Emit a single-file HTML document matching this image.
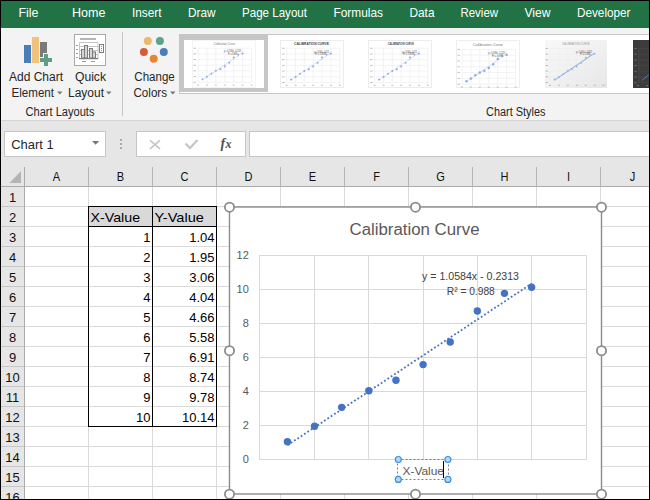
<!DOCTYPE html>
<html><head><meta charset="utf-8"><style>
html,body{margin:0;padding:0;width:650px;height:500px;overflow:hidden;background:#fff;font-family:"Liberation Sans", sans-serif;}
svg{display:block;}
</style></head><body>
<svg width="650" height="500" viewBox="0 0 650 500" font-family='"Liberation Sans", sans-serif'><rect x="0" y="0" width="650" height="500" fill="#ffffff"/>
<rect x="0" y="0" width="650" height="28" fill="#217346"/>
<text x="18.5" y="17.3" font-size="13" fill="#ffffff" textLength="20" lengthAdjust="spacingAndGlyphs">File</text>
<text x="72.0" y="17.3" font-size="13" fill="#ffffff" textLength="33.5" lengthAdjust="spacingAndGlyphs">Home</text>
<text x="132.0" y="17.3" font-size="13" fill="#ffffff" textLength="29.5" lengthAdjust="spacingAndGlyphs">Insert</text>
<text x="188.0" y="17.3" font-size="13" fill="#ffffff" textLength="27.5" lengthAdjust="spacingAndGlyphs">Draw</text>
<text x="242.0" y="17.3" font-size="13" fill="#ffffff" textLength="65.0" lengthAdjust="spacingAndGlyphs">Page Layout</text>
<text x="333.5" y="17.3" font-size="13" fill="#ffffff" textLength="49.5" lengthAdjust="spacingAndGlyphs">Formulas</text>
<text x="409.5" y="17.3" font-size="13" fill="#ffffff" textLength="25" lengthAdjust="spacingAndGlyphs">Data</text>
<text x="460.5" y="17.3" font-size="13" fill="#ffffff" textLength="37.5" lengthAdjust="spacingAndGlyphs">Review</text>
<text x="524.5" y="17.3" font-size="13" fill="#ffffff" textLength="26" lengthAdjust="spacingAndGlyphs">View</text>
<text x="577.0" y="17.3" font-size="13" fill="#ffffff" textLength="53.5" lengthAdjust="spacingAndGlyphs">Developer</text>
<rect x="0" y="28" width="650" height="92" fill="#f3f3f3"/>
<rect x="0" y="120" width="650" height="1" fill="#d5d5d5"/>
<rect x="24" y="45" width="7" height="18" fill="#4a7ebb"/>
<rect x="32" y="37" width="7" height="26" fill="#f0c27b"/>
<rect x="40" y="42" width="7" height="15" fill="#7a7a7a"/>
<path d="M44 54h4v4h4v4h-4v4h-4v-4h-4v-4h4z" fill="#5e9f84" stroke="#f3f3f3" stroke-width="2" paint-order="stroke"/>
<text x="9" y="80.7" font-size="12" fill="#262626" textLength="54" lengthAdjust="spacingAndGlyphs">Add Chart</text>
<text x="11.5" y="97" font-size="12" fill="#262626" textLength="42.5" lengthAdjust="spacingAndGlyphs">Element</text>
<path d="M57 91.5h5.5l-2.75 3z" fill="#777"/>
<rect x="74.5" y="34.5" width="31" height="31" fill="#fff" stroke="#a8a8a8" stroke-width="1"/>
<rect x="80" y="38" width="16" height="2" fill="#b5b5b5"/>
<g stroke="#c4c4c4" stroke-width="1" fill="none"><path d="M79.5 42.5h18.5M79.5 46.5h18.5M79.5 50.5h18.5M79.5 54.5h18.5M79.5 42.5v16M98 42.5v16"/></g>
<g stroke="#7b7b7b" stroke-width="1" fill="#d6d6d6"><rect x="81.5" y="49.5" width="3" height="8.5"/><rect x="84.5" y="45.5" width="3" height="12.5"/><rect x="89.5" y="48.5" width="3" height="9.5"/><rect x="92.5" y="52" width="3" height="6"/></g>
<rect x="79" y="58" width="19" height="1.2" fill="#7b7b7b"/>
<g fill="#9a9a9a"><rect x="76" y="45" width="2" height="1"/><rect x="76" y="49" width="2" height="1"/><rect x="76" y="53" width="2" height="1"/><rect x="76" y="57" width="2" height="1"/><rect x="82" y="61" width="4" height="1"/><rect x="91" y="61" width="4" height="1"/></g>
<rect x="99.5" y="44.5" width="4" height="8" fill="#fff" stroke="#7b7b7b" stroke-width="1"/>
<g fill="#7b7b7b"><circle cx="101.5" cy="46.5" r="0.6"/><circle cx="101.5" cy="48.5" r="0.6"/><circle cx="101.5" cy="50.5" r="0.6"/></g>
<text x="75" y="80.7" font-size="12" fill="#262626" textLength="31" lengthAdjust="spacingAndGlyphs">Quick</text>
<text x="68" y="97" font-size="12" fill="#262626" textLength="36" lengthAdjust="spacingAndGlyphs">Layout</text>
<path d="M106 91.5h5.5l-2.75 3z" fill="#777"/>
<text x="25.5" y="115.7" font-size="12" fill="#262626" textLength="69" lengthAdjust="spacingAndGlyphs">Chart Layouts</text>
<rect x="122" y="32" width="1" height="84" fill="#c4c4c4"/>
<circle cx="147.8" cy="41" r="4" fill="#eab86a"/>
<circle cx="159.9" cy="41" r="4" fill="#5fa28a"/>
<circle cx="143.9" cy="52" r="4" fill="#d75a39"/>
<circle cx="163.8" cy="52" r="4" fill="#4a7ebb"/>
<circle cx="153.7" cy="58.7" r="4" fill="#e8862f"/>
<text x="134.3" y="81" font-size="12" fill="#262626" textLength="40.5" lengthAdjust="spacingAndGlyphs">Change</text>
<text x="133.5" y="97" font-size="12" fill="#262626" textLength="33.5" lengthAdjust="spacingAndGlyphs">Colors</text>
<path d="M170 91.5h5.5l-2.75 3z" fill="#777"/>
<rect x="179.5" y="34.5" width="480" height="59" fill="#ffffff" stroke="#c6c6c6" stroke-width="1"/>
<rect x="180" y="35" width="88" height="57" fill="#c6c6c6"/>
<rect x="184" y="40" width="80" height="48" fill="#ffffff"/>
<defs><linearGradient id="gr5" x1="0" y1="0" x2="1" y2="1"><stop offset="0" stop-color="#f8f8f8"/><stop offset="0.5" stop-color="#f1f1f1"/><stop offset="1" stop-color="#e6e6e6"/></linearGradient></defs>
<rect x="192.5" y="40.5" width="63" height="47" fill="#ffffff" stroke="#f4f4f4" stroke-width="1"/><line x1="198" y1="82.3" x2="251.5" y2="82.3" stroke="#eeeeee" stroke-width="0.7"/><line x1="198.0" y1="48.2" x2="198.0" y2="82.3" stroke="#eeeeee" stroke-width="0.7"/><line x1="198" y1="76.6" x2="251.5" y2="76.6" stroke="#eeeeee" stroke-width="0.7"/><line x1="206.9" y1="48.2" x2="206.9" y2="82.3" stroke="#eeeeee" stroke-width="0.7"/><line x1="198" y1="70.9" x2="251.5" y2="70.9" stroke="#eeeeee" stroke-width="0.7"/><line x1="215.8" y1="48.2" x2="215.8" y2="82.3" stroke="#eeeeee" stroke-width="0.7"/><line x1="198" y1="65.2" x2="251.5" y2="65.2" stroke="#eeeeee" stroke-width="0.7"/><line x1="224.8" y1="48.2" x2="224.8" y2="82.3" stroke="#eeeeee" stroke-width="0.7"/><line x1="198" y1="59.6" x2="251.5" y2="59.6" stroke="#eeeeee" stroke-width="0.7"/><line x1="233.7" y1="48.2" x2="233.7" y2="82.3" stroke="#eeeeee" stroke-width="0.7"/><line x1="198" y1="53.9" x2="251.5" y2="53.9" stroke="#eeeeee" stroke-width="0.7"/><line x1="242.6" y1="48.2" x2="242.6" y2="82.3" stroke="#eeeeee" stroke-width="0.7"/><line x1="198" y1="48.2" x2="251.5" y2="48.2" stroke="#eeeeee" stroke-width="0.7"/><line x1="251.5" y1="48.2" x2="251.5" y2="82.3" stroke="#eeeeee" stroke-width="0.7"/><rect x="193.5" y="81.8" width="2.5" height="1" fill="#8a8a8a" opacity="0.55"/><rect x="197.0" y="84.6" width="2" height="1" fill="#8a8a8a" opacity="0.55"/><rect x="193.5" y="76.1" width="2.5" height="1" fill="#8a8a8a" opacity="0.55"/><rect x="205.9" y="84.6" width="2" height="1" fill="#8a8a8a" opacity="0.55"/><rect x="193.5" y="70.4" width="2.5" height="1" fill="#8a8a8a" opacity="0.55"/><rect x="214.8" y="84.6" width="2" height="1" fill="#8a8a8a" opacity="0.55"/><rect x="193.5" y="64.8" width="2.5" height="1" fill="#8a8a8a" opacity="0.55"/><rect x="223.8" y="84.6" width="2" height="1" fill="#8a8a8a" opacity="0.55"/><rect x="193.5" y="59.1" width="2.5" height="1" fill="#8a8a8a" opacity="0.55"/><rect x="232.7" y="84.6" width="2" height="1" fill="#8a8a8a" opacity="0.55"/><rect x="193.5" y="53.4" width="2.5" height="1" fill="#8a8a8a" opacity="0.55"/><rect x="241.6" y="84.6" width="2" height="1" fill="#8a8a8a" opacity="0.55"/><rect x="193.5" y="47.7" width="2.5" height="1" fill="#8a8a8a" opacity="0.55"/><rect x="250.5" y="84.6" width="2" height="1" fill="#8a8a8a" opacity="0.55"/><text x="213.5" y="45.28" font-size="3" fill="#777777" textLength="21.5" lengthAdjust="spacingAndGlyphs">Calibration Curve</text><text x="224" y="52.2" font-size="2.6" fill="#444" textLength="17" lengthAdjust="spacingAndGlyphs">y = 1.0584x - 0.2313</text><text x="228" y="55.3" font-size="2.6" fill="#444" textLength="9" lengthAdjust="spacingAndGlyphs">R² = 0.988</text><line x1="202.5" y1="79.9" x2="242.6" y2="52.9" stroke="#8aa6dd" stroke-width="0.7" stroke-dasharray="0.8 0.8"/><circle cx="202.5" cy="79.3" r="1.05" fill="#98b0e0"/><circle cx="206.9" cy="76.8" r="1.05" fill="#98b0e0"/><circle cx="211.4" cy="73.6" r="1.05" fill="#98b0e0"/><circle cx="215.8" cy="70.8" r="1.05" fill="#98b0e0"/><circle cx="220.3" cy="69.1" r="1.05" fill="#98b0e0"/><circle cx="224.8" cy="66.4" r="1.05" fill="#98b0e0"/><circle cx="229.2" cy="62.7" r="1.05" fill="#98b0e0"/><circle cx="233.7" cy="57.5" r="1.05" fill="#98b0e0"/><circle cx="238.1" cy="54.5" r="1.05" fill="#98b0e0"/><circle cx="242.6" cy="53.5" r="1.05" fill="#98b0e0"/>
<rect x="280.5" y="40.5" width="63" height="47" fill="#ffffff" stroke="#ececec" stroke-width="1"/><line x1="286.6" y1="82.5" x2="339.8" y2="82.5" stroke="#eeeeee" stroke-width="0.7"/><line x1="286.6" y1="48.3" x2="286.6" y2="82.5" stroke="#eeeeee" stroke-width="0.7"/><line x1="286.6" y1="76.8" x2="339.8" y2="76.8" stroke="#eeeeee" stroke-width="0.7"/><line x1="295.5" y1="48.3" x2="295.5" y2="82.5" stroke="#eeeeee" stroke-width="0.7"/><line x1="286.6" y1="71.1" x2="339.8" y2="71.1" stroke="#eeeeee" stroke-width="0.7"/><line x1="304.3" y1="48.3" x2="304.3" y2="82.5" stroke="#eeeeee" stroke-width="0.7"/><line x1="286.6" y1="65.4" x2="339.8" y2="65.4" stroke="#eeeeee" stroke-width="0.7"/><line x1="313.2" y1="48.3" x2="313.2" y2="82.5" stroke="#eeeeee" stroke-width="0.7"/><line x1="286.6" y1="59.7" x2="339.8" y2="59.7" stroke="#eeeeee" stroke-width="0.7"/><line x1="322.1" y1="48.3" x2="322.1" y2="82.5" stroke="#eeeeee" stroke-width="0.7"/><line x1="286.6" y1="54.0" x2="339.8" y2="54.0" stroke="#eeeeee" stroke-width="0.7"/><line x1="330.9" y1="48.3" x2="330.9" y2="82.5" stroke="#eeeeee" stroke-width="0.7"/><line x1="286.6" y1="48.3" x2="339.8" y2="48.3" stroke="#eeeeee" stroke-width="0.7"/><line x1="339.8" y1="48.3" x2="339.8" y2="82.5" stroke="#eeeeee" stroke-width="0.7"/><rect x="282.1" y="82.0" width="2.5" height="1" fill="#8a8a8a" opacity="0.55"/><rect x="285.6" y="84.8" width="2" height="1" fill="#8a8a8a" opacity="0.55"/><rect x="282.1" y="76.3" width="2.5" height="1" fill="#8a8a8a" opacity="0.55"/><rect x="294.5" y="84.8" width="2" height="1" fill="#8a8a8a" opacity="0.55"/><rect x="282.1" y="70.6" width="2.5" height="1" fill="#8a8a8a" opacity="0.55"/><rect x="303.3" y="84.8" width="2" height="1" fill="#8a8a8a" opacity="0.55"/><rect x="282.1" y="64.9" width="2.5" height="1" fill="#8a8a8a" opacity="0.55"/><rect x="312.2" y="84.8" width="2" height="1" fill="#8a8a8a" opacity="0.55"/><rect x="282.1" y="59.2" width="2.5" height="1" fill="#8a8a8a" opacity="0.55"/><rect x="321.1" y="84.8" width="2" height="1" fill="#8a8a8a" opacity="0.55"/><rect x="282.1" y="53.5" width="2.5" height="1" fill="#8a8a8a" opacity="0.55"/><rect x="329.9" y="84.8" width="2" height="1" fill="#8a8a8a" opacity="0.55"/><rect x="282.1" y="47.8" width="2.5" height="1" fill="#8a8a8a" opacity="0.55"/><rect x="338.8" y="84.8" width="2" height="1" fill="#8a8a8a" opacity="0.55"/><text x="294" y="45.28" font-size="3" fill="#444444" font-weight="bold" textLength="35" lengthAdjust="spacingAndGlyphs">CALIBRATION CURVE</text><text x="314" y="53" font-size="2.6" fill="#444" textLength="15" lengthAdjust="spacingAndGlyphs">y = 1.0584x - 0.2313</text><text x="315" y="55.2" font-size="2.6" fill="#444" textLength="11" lengthAdjust="spacingAndGlyphs">R² = 0.988</text><line x1="291.0" y1="80.1" x2="330.9" y2="53.0" stroke="#8aa6dd" stroke-width="0.7" stroke-dasharray="0.8 0.8"/><circle cx="291.0" cy="79.5" r="1.05" fill="#98b0e0"/><circle cx="295.5" cy="76.9" r="1.05" fill="#98b0e0"/><circle cx="299.9" cy="73.8" r="1.05" fill="#98b0e0"/><circle cx="304.3" cy="71.0" r="1.05" fill="#98b0e0"/><circle cx="308.8" cy="69.2" r="1.05" fill="#98b0e0"/><circle cx="313.2" cy="66.6" r="1.05" fill="#98b0e0"/><circle cx="317.6" cy="62.8" r="1.05" fill="#98b0e0"/><circle cx="322.1" cy="57.6" r="1.05" fill="#98b0e0"/><circle cx="326.5" cy="54.6" r="1.05" fill="#98b0e0"/><circle cx="330.9" cy="53.6" r="1.05" fill="#98b0e0"/>
<rect x="368.5" y="40.5" width="63" height="47" fill="#ffffff" stroke="#ececec" stroke-width="1"/><line x1="374.6" y1="82.5" x2="427.8" y2="82.5" stroke="#eeeeee" stroke-width="0.7"/><line x1="374.6" y1="48.3" x2="374.6" y2="82.5" stroke="#eeeeee" stroke-width="0.7"/><line x1="374.6" y1="76.8" x2="427.8" y2="76.8" stroke="#eeeeee" stroke-width="0.7"/><line x1="383.5" y1="48.3" x2="383.5" y2="82.5" stroke="#eeeeee" stroke-width="0.7"/><line x1="374.6" y1="71.1" x2="427.8" y2="71.1" stroke="#eeeeee" stroke-width="0.7"/><line x1="392.3" y1="48.3" x2="392.3" y2="82.5" stroke="#eeeeee" stroke-width="0.7"/><line x1="374.6" y1="65.4" x2="427.8" y2="65.4" stroke="#eeeeee" stroke-width="0.7"/><line x1="401.2" y1="48.3" x2="401.2" y2="82.5" stroke="#eeeeee" stroke-width="0.7"/><line x1="374.6" y1="59.7" x2="427.8" y2="59.7" stroke="#eeeeee" stroke-width="0.7"/><line x1="410.1" y1="48.3" x2="410.1" y2="82.5" stroke="#eeeeee" stroke-width="0.7"/><line x1="374.6" y1="54.0" x2="427.8" y2="54.0" stroke="#eeeeee" stroke-width="0.7"/><line x1="418.9" y1="48.3" x2="418.9" y2="82.5" stroke="#eeeeee" stroke-width="0.7"/><line x1="374.6" y1="48.3" x2="427.8" y2="48.3" stroke="#eeeeee" stroke-width="0.7"/><line x1="427.8" y1="48.3" x2="427.8" y2="82.5" stroke="#eeeeee" stroke-width="0.7"/><rect x="370.1" y="82.0" width="2.5" height="1" fill="#8a8a8a" opacity="0.55"/><rect x="373.6" y="84.8" width="2" height="1" fill="#8a8a8a" opacity="0.55"/><rect x="370.1" y="76.3" width="2.5" height="1" fill="#8a8a8a" opacity="0.55"/><rect x="382.5" y="84.8" width="2" height="1" fill="#8a8a8a" opacity="0.55"/><rect x="370.1" y="70.6" width="2.5" height="1" fill="#8a8a8a" opacity="0.55"/><rect x="391.3" y="84.8" width="2" height="1" fill="#8a8a8a" opacity="0.55"/><rect x="370.1" y="64.9" width="2.5" height="1" fill="#8a8a8a" opacity="0.55"/><rect x="400.2" y="84.8" width="2" height="1" fill="#8a8a8a" opacity="0.55"/><rect x="370.1" y="59.2" width="2.5" height="1" fill="#8a8a8a" opacity="0.55"/><rect x="409.1" y="84.8" width="2" height="1" fill="#8a8a8a" opacity="0.55"/><rect x="370.1" y="53.5" width="2.5" height="1" fill="#8a8a8a" opacity="0.55"/><rect x="417.9" y="84.8" width="2" height="1" fill="#8a8a8a" opacity="0.55"/><rect x="370.1" y="47.8" width="2.5" height="1" fill="#8a8a8a" opacity="0.55"/><rect x="426.8" y="84.8" width="2" height="1" fill="#8a8a8a" opacity="0.55"/><text x="387.7" y="45.28" font-size="3" fill="#444444" font-weight="bold" textLength="26.099999999999998" lengthAdjust="spacingAndGlyphs">CALIBRATION CURVE</text><text x="402" y="53" font-size="2.6" fill="#444" textLength="15" lengthAdjust="spacingAndGlyphs">y = 1.0584x - 0.2313</text><text x="403" y="55.2" font-size="2.6" fill="#444" textLength="11" lengthAdjust="spacingAndGlyphs">R² = 0.988</text><line x1="379.0" y1="80.1" x2="418.9" y2="53.0" stroke="#8aa6dd" stroke-width="0.7" stroke-dasharray="0.8 0.8"/><circle cx="379.0" cy="79.5" r="1.05" fill="#98b0e0"/><circle cx="383.5" cy="76.9" r="1.05" fill="#98b0e0"/><circle cx="387.9" cy="73.8" r="1.05" fill="#98b0e0"/><circle cx="392.3" cy="71.0" r="1.05" fill="#98b0e0"/><circle cx="396.8" cy="69.2" r="1.05" fill="#98b0e0"/><circle cx="401.2" cy="66.6" r="1.05" fill="#98b0e0"/><circle cx="405.6" cy="62.8" r="1.05" fill="#98b0e0"/><circle cx="410.1" cy="57.6" r="1.05" fill="#98b0e0"/><circle cx="414.5" cy="54.6" r="1.05" fill="#98b0e0"/><circle cx="418.9" cy="53.6" r="1.05" fill="#98b0e0"/>
<rect x="456.5" y="40.5" width="63" height="47" fill="#ffffff" stroke="#eeeeee" stroke-width="1"/><line x1="462" y1="84.2" x2="515.5" y2="84.2" stroke="#eeeeee" stroke-width="0.7"/><line x1="462.0" y1="49.4" x2="462.0" y2="84.2" stroke="#eeeeee" stroke-width="0.7"/><line x1="462" y1="78.4" x2="515.5" y2="78.4" stroke="#eeeeee" stroke-width="0.7"/><line x1="470.9" y1="49.4" x2="470.9" y2="84.2" stroke="#eeeeee" stroke-width="0.7"/><line x1="462" y1="72.6" x2="515.5" y2="72.6" stroke="#eeeeee" stroke-width="0.7"/><line x1="479.8" y1="49.4" x2="479.8" y2="84.2" stroke="#eeeeee" stroke-width="0.7"/><line x1="462" y1="66.8" x2="515.5" y2="66.8" stroke="#eeeeee" stroke-width="0.7"/><line x1="488.8" y1="49.4" x2="488.8" y2="84.2" stroke="#eeeeee" stroke-width="0.7"/><line x1="462" y1="61.0" x2="515.5" y2="61.0" stroke="#eeeeee" stroke-width="0.7"/><line x1="497.7" y1="49.4" x2="497.7" y2="84.2" stroke="#eeeeee" stroke-width="0.7"/><line x1="462" y1="55.2" x2="515.5" y2="55.2" stroke="#eeeeee" stroke-width="0.7"/><line x1="506.6" y1="49.4" x2="506.6" y2="84.2" stroke="#eeeeee" stroke-width="0.7"/><line x1="462" y1="49.4" x2="515.5" y2="49.4" stroke="#eeeeee" stroke-width="0.7"/><line x1="515.5" y1="49.4" x2="515.5" y2="84.2" stroke="#eeeeee" stroke-width="0.7"/><rect x="457.5" y="83.7" width="2.5" height="1" fill="#8a8a8a" opacity="0.55"/><rect x="461.0" y="86.5" width="2" height="1" fill="#8a8a8a" opacity="0.55"/><rect x="457.5" y="77.9" width="2.5" height="1" fill="#8a8a8a" opacity="0.55"/><rect x="469.9" y="86.5" width="2" height="1" fill="#8a8a8a" opacity="0.55"/><rect x="457.5" y="72.1" width="2.5" height="1" fill="#8a8a8a" opacity="0.55"/><rect x="478.8" y="86.5" width="2" height="1" fill="#8a8a8a" opacity="0.55"/><rect x="457.5" y="66.3" width="2.5" height="1" fill="#8a8a8a" opacity="0.55"/><rect x="487.8" y="86.5" width="2" height="1" fill="#8a8a8a" opacity="0.55"/><rect x="457.5" y="60.5" width="2.5" height="1" fill="#8a8a8a" opacity="0.55"/><rect x="496.7" y="86.5" width="2" height="1" fill="#8a8a8a" opacity="0.55"/><rect x="457.5" y="54.7" width="2.5" height="1" fill="#8a8a8a" opacity="0.55"/><rect x="505.6" y="86.5" width="2" height="1" fill="#8a8a8a" opacity="0.55"/><rect x="457.5" y="48.9" width="2.5" height="1" fill="#8a8a8a" opacity="0.55"/><rect x="514.5" y="86.5" width="2" height="1" fill="#8a8a8a" opacity="0.55"/><text x="473" y="45.64" font-size="4" fill="#777777" textLength="30" lengthAdjust="spacingAndGlyphs">Calibration Curve</text><text x="488" y="54.4" font-size="2.6" fill="#444" textLength="17" lengthAdjust="spacingAndGlyphs">y = 1.0584x - 0.2313</text><text x="492" y="56.6" font-size="2.6" fill="#444" textLength="11" lengthAdjust="spacingAndGlyphs">R² = 0.988</text><line x1="466.5" y1="81.8" x2="506.6" y2="54.2" stroke="#8aa6dd" stroke-width="0.7" stroke-dasharray="0.8 0.8"/><circle cx="466.5" cy="81.2" r="1.2" fill="#90aadd"/><circle cx="470.9" cy="78.5" r="1.2" fill="#90aadd"/><circle cx="475.4" cy="75.3" r="1.2" fill="#90aadd"/><circle cx="479.8" cy="72.5" r="1.2" fill="#90aadd"/><circle cx="484.3" cy="70.7" r="1.2" fill="#90aadd"/><circle cx="488.8" cy="68.0" r="1.2" fill="#90aadd"/><circle cx="493.2" cy="64.2" r="1.2" fill="#90aadd"/><circle cx="497.7" cy="58.9" r="1.2" fill="#90aadd"/><circle cx="502.1" cy="55.8" r="1.2" fill="#90aadd"/><circle cx="506.6" cy="54.8" r="1.2" fill="#90aadd"/>
<rect x="545" y="40" width="62" height="48" fill="url(#gr5)"/><line x1="550" y1="82.5" x2="603.5" y2="82.5" stroke="#eeeeee" stroke-width="0.7"/><line x1="550.0" y1="48.4" x2="550.0" y2="82.5" stroke="#eeeeee" stroke-width="0.7"/><line x1="550" y1="76.8" x2="603.5" y2="76.8" stroke="#eeeeee" stroke-width="0.7"/><line x1="558.9" y1="48.4" x2="558.9" y2="82.5" stroke="#eeeeee" stroke-width="0.7"/><line x1="550" y1="71.1" x2="603.5" y2="71.1" stroke="#eeeeee" stroke-width="0.7"/><line x1="567.8" y1="48.4" x2="567.8" y2="82.5" stroke="#eeeeee" stroke-width="0.7"/><line x1="550" y1="65.5" x2="603.5" y2="65.5" stroke="#eeeeee" stroke-width="0.7"/><line x1="576.8" y1="48.4" x2="576.8" y2="82.5" stroke="#eeeeee" stroke-width="0.7"/><line x1="550" y1="59.8" x2="603.5" y2="59.8" stroke="#eeeeee" stroke-width="0.7"/><line x1="585.7" y1="48.4" x2="585.7" y2="82.5" stroke="#eeeeee" stroke-width="0.7"/><line x1="550" y1="54.1" x2="603.5" y2="54.1" stroke="#eeeeee" stroke-width="0.7"/><line x1="594.6" y1="48.4" x2="594.6" y2="82.5" stroke="#eeeeee" stroke-width="0.7"/><line x1="550" y1="48.4" x2="603.5" y2="48.4" stroke="#eeeeee" stroke-width="0.7"/><line x1="603.5" y1="48.4" x2="603.5" y2="82.5" stroke="#eeeeee" stroke-width="0.7"/><rect x="545.5" y="82.0" width="2.5" height="1" fill="#8a8a8a" opacity="0.55"/><rect x="549.0" y="84.8" width="2" height="1" fill="#8a8a8a" opacity="0.55"/><rect x="545.5" y="76.3" width="2.5" height="1" fill="#8a8a8a" opacity="0.55"/><rect x="557.9" y="84.8" width="2" height="1" fill="#8a8a8a" opacity="0.55"/><rect x="545.5" y="70.6" width="2.5" height="1" fill="#8a8a8a" opacity="0.55"/><rect x="566.8" y="84.8" width="2" height="1" fill="#8a8a8a" opacity="0.55"/><rect x="545.5" y="65.0" width="2.5" height="1" fill="#8a8a8a" opacity="0.55"/><rect x="575.8" y="84.8" width="2" height="1" fill="#8a8a8a" opacity="0.55"/><rect x="545.5" y="59.3" width="2.5" height="1" fill="#8a8a8a" opacity="0.55"/><rect x="584.7" y="84.8" width="2" height="1" fill="#8a8a8a" opacity="0.55"/><rect x="545.5" y="53.6" width="2.5" height="1" fill="#8a8a8a" opacity="0.55"/><rect x="593.6" y="84.8" width="2" height="1" fill="#8a8a8a" opacity="0.55"/><rect x="545.5" y="47.9" width="2.5" height="1" fill="#8a8a8a" opacity="0.55"/><rect x="602.5" y="84.8" width="2" height="1" fill="#8a8a8a" opacity="0.55"/><text x="562" y="45.28" font-size="3" fill="#999999" textLength="27.700000000000003" lengthAdjust="spacingAndGlyphs">CALIBRATION CURVE</text><text x="576" y="52.5" font-size="2.6" fill="#444" textLength="16" lengthAdjust="spacingAndGlyphs">y = 1.0584x - 0.2313</text><text x="580" y="54.5" font-size="2.6" fill="#444" textLength="10" lengthAdjust="spacingAndGlyphs">R² = 0.988</text><line x1="554.5" y1="80.1" x2="594.6" y2="53.1" stroke="#8fb0e6" stroke-width="1.1"/><circle cx="554.5" cy="79.5" r="0.9" fill="#9bb5e3"/><circle cx="558.9" cy="77.0" r="0.9" fill="#9bb5e3"/><circle cx="563.4" cy="73.8" r="0.9" fill="#9bb5e3"/><circle cx="567.8" cy="71.0" r="0.9" fill="#9bb5e3"/><circle cx="572.3" cy="69.3" r="0.9" fill="#9bb5e3"/><circle cx="576.8" cy="66.6" r="0.9" fill="#9bb5e3"/><circle cx="581.2" cy="62.9" r="0.9" fill="#9bb5e3"/><circle cx="585.7" cy="57.7" r="0.9" fill="#9bb5e3"/><circle cx="590.1" cy="54.7" r="0.9" fill="#9bb5e3"/><circle cx="594.6" cy="53.7" r="0.9" fill="#9bb5e3"/>
<rect x="633" y="40" width="16" height="48" fill="#3c3c3c"/>
<g fill="#aaaaaa" opacity="0.5"><rect x="634.5" y="48" width="2" height="1"/><rect x="634.5" y="53.7" width="2" height="1"/><rect x="634.5" y="59.4" width="2" height="1"/><rect x="634.5" y="65" width="2" height="1"/><rect x="634.5" y="70.8" width="2" height="1"/><rect x="634.5" y="76.5" width="2" height="1"/><rect x="634.5" y="82.2" width="2" height="1"/></g>
<line x1="638.9" y1="48.5" x2="638.9" y2="82.5" stroke="#555" stroke-width="0.6"/><g stroke="#4a4a4a" stroke-width="0.6"><path d="M639 48.5h10M639 54.2h10M639 59.9h10M639 65.6h10M639 71.3h10M639 77h10M639 82.5h10"/></g><g fill="#aaa" opacity="0.5"><rect x="637" y="85" width="2" height="1"/><rect x="646" y="85" width="2" height="1"/></g>
<line x1="641.8" y1="80.6" x2="649" y2="74.6" stroke="#5a7cc0" stroke-width="0.9"/>
<text x="486" y="115.5" font-size="12" fill="#262626" textLength="59.5" lengthAdjust="spacingAndGlyphs">Chart Styles</text>
<rect x="0" y="121" width="650" height="66" fill="#e6e6e6"/>
<rect x="4.5" y="131.5" width="101" height="25" fill="#fff" stroke="#c6c6c6" stroke-width="1"/>
<text x="11.2" y="149.3" font-size="13" fill="#262626" textLength="42.5" lengthAdjust="spacingAndGlyphs">Chart 1</text>
<path d="M92 141h7.2l-3.6 3.8z" fill="#777"/>
<g fill="#ababab"><rect x="120" y="139" width="2" height="2"/><rect x="120" y="143" width="2" height="2"/><rect x="120" y="147" width="2" height="2"/></g>
<rect x="136.5" y="131.5" width="109" height="25" fill="#fff" stroke="#c6c6c6" stroke-width="1"/>
<path d="M150 140.3l10 8.5M160 140.3l-10 8.5" stroke="#c4c4c4" stroke-width="1.6"/>
<path d="M185.5 143.5l4.5 4.5l7.5-8" stroke="#c8c8c8" stroke-width="2.4" fill="none"/>
<text x="220.5" y="148" font-size="14" font-family="Liberation Serif" font-style="italic" font-weight="bold" fill="#505050">f</text>
<text x="225.5" y="147.5" font-size="12" font-family="Liberation Serif" font-style="italic" font-weight="bold" fill="#505050">x</text>
<rect x="249.5" y="131.5" width="420" height="25" fill="#fff" stroke="#c6c6c6" stroke-width="1"/>
<rect x="0" y="187" width="24" height="313" fill="#e6e6e6"/>
<rect x="0" y="186" width="650" height="1" fill="#ababab"/>
<rect x="24" y="167" width="1" height="333" fill="#ababab"/>
<path d="M9.5 183h11.5v-12z" fill="#b4b4b4"/>
<g transform="translate(56.5,181.3) scale(0.85,1)">
<text x="0" y="0" font-size="13" fill="#111111" text-anchor="middle">A</text>
</g>
<rect x="88" y="167" width="1" height="19" fill="#b4b4b4"/>
<g transform="translate(120.5,181.3) scale(0.85,1)">
<text x="0" y="0" font-size="13" fill="#111111" text-anchor="middle">B</text>
</g>
<rect x="152" y="167" width="1" height="19" fill="#b4b4b4"/>
<g transform="translate(184.5,181.3) scale(0.85,1)">
<text x="0" y="0" font-size="13" fill="#111111" text-anchor="middle">C</text>
</g>
<rect x="216" y="167" width="1" height="19" fill="#b4b4b4"/>
<g transform="translate(248.5,181.3) scale(0.85,1)">
<text x="0" y="0" font-size="13" fill="#111111" text-anchor="middle">D</text>
</g>
<rect x="280" y="167" width="1" height="19" fill="#b4b4b4"/>
<g transform="translate(312.5,181.3) scale(0.85,1)">
<text x="0" y="0" font-size="13" fill="#111111" text-anchor="middle">E</text>
</g>
<rect x="344" y="167" width="1" height="19" fill="#b4b4b4"/>
<g transform="translate(376.5,181.3) scale(0.85,1)">
<text x="0" y="0" font-size="13" fill="#111111" text-anchor="middle">F</text>
</g>
<rect x="408" y="167" width="1" height="19" fill="#b4b4b4"/>
<g transform="translate(440.5,181.3) scale(0.85,1)">
<text x="0" y="0" font-size="13" fill="#111111" text-anchor="middle">G</text>
</g>
<rect x="472" y="167" width="1" height="19" fill="#b4b4b4"/>
<g transform="translate(504.5,181.3) scale(0.85,1)">
<text x="0" y="0" font-size="13" fill="#111111" text-anchor="middle">H</text>
</g>
<rect x="536" y="167" width="1" height="19" fill="#b4b4b4"/>
<g transform="translate(568.5,181.3) scale(0.85,1)">
<text x="0" y="0" font-size="13" fill="#111111" text-anchor="middle">I</text>
</g>
<rect x="600" y="167" width="1" height="19" fill="#b4b4b4"/>
<g transform="translate(632.5,181.3) scale(0.85,1)">
<text x="0" y="0" font-size="13" fill="#111111" text-anchor="middle">J</text>
</g>
<rect x="0" y="206" width="24" height="1" fill="#c6c6c6"/>
<rect x="25" y="206" width="625" height="1" fill="#dadada"/>
<text x="12.5" y="201.7" font-size="13" fill="#111111" text-anchor="middle">1</text>
<rect x="0" y="226" width="24" height="1" fill="#c6c6c6"/>
<rect x="25" y="226" width="625" height="1" fill="#dadada"/>
<text x="12.5" y="221.7" font-size="13" fill="#111111" text-anchor="middle">2</text>
<rect x="0" y="246" width="24" height="1" fill="#c6c6c6"/>
<rect x="25" y="246" width="625" height="1" fill="#dadada"/>
<text x="12.5" y="241.7" font-size="13" fill="#111111" text-anchor="middle">3</text>
<rect x="0" y="266" width="24" height="1" fill="#c6c6c6"/>
<rect x="25" y="266" width="625" height="1" fill="#dadada"/>
<text x="12.5" y="261.7" font-size="13" fill="#111111" text-anchor="middle">4</text>
<rect x="0" y="286" width="24" height="1" fill="#c6c6c6"/>
<rect x="25" y="286" width="625" height="1" fill="#dadada"/>
<text x="12.5" y="281.7" font-size="13" fill="#111111" text-anchor="middle">5</text>
<rect x="0" y="306" width="24" height="1" fill="#c6c6c6"/>
<rect x="25" y="306" width="625" height="1" fill="#dadada"/>
<text x="12.5" y="301.7" font-size="13" fill="#111111" text-anchor="middle">6</text>
<rect x="0" y="326" width="24" height="1" fill="#c6c6c6"/>
<rect x="25" y="326" width="625" height="1" fill="#dadada"/>
<text x="12.5" y="321.7" font-size="13" fill="#111111" text-anchor="middle">7</text>
<rect x="0" y="346" width="24" height="1" fill="#c6c6c6"/>
<rect x="25" y="346" width="625" height="1" fill="#dadada"/>
<text x="12.5" y="341.7" font-size="13" fill="#111111" text-anchor="middle">8</text>
<rect x="0" y="366" width="24" height="1" fill="#c6c6c6"/>
<rect x="25" y="366" width="625" height="1" fill="#dadada"/>
<text x="12.5" y="361.7" font-size="13" fill="#111111" text-anchor="middle">9</text>
<rect x="0" y="386" width="24" height="1" fill="#c6c6c6"/>
<rect x="25" y="386" width="625" height="1" fill="#dadada"/>
<text x="12.5" y="381.7" font-size="13" fill="#111111" text-anchor="middle">10</text>
<rect x="0" y="406" width="24" height="1" fill="#c6c6c6"/>
<rect x="25" y="406" width="625" height="1" fill="#dadada"/>
<text x="12.5" y="401.7" font-size="13" fill="#111111" text-anchor="middle">11</text>
<rect x="0" y="426" width="24" height="1" fill="#c6c6c6"/>
<rect x="25" y="426" width="625" height="1" fill="#dadada"/>
<text x="12.5" y="421.7" font-size="13" fill="#111111" text-anchor="middle">12</text>
<rect x="0" y="446" width="24" height="1" fill="#c6c6c6"/>
<rect x="25" y="446" width="625" height="1" fill="#dadada"/>
<text x="12.5" y="441.7" font-size="13" fill="#111111" text-anchor="middle">13</text>
<rect x="0" y="466" width="24" height="1" fill="#c6c6c6"/>
<rect x="25" y="466" width="625" height="1" fill="#dadada"/>
<text x="12.5" y="461.7" font-size="13" fill="#111111" text-anchor="middle">14</text>
<rect x="0" y="486" width="24" height="1" fill="#c6c6c6"/>
<rect x="25" y="486" width="625" height="1" fill="#dadada"/>
<text x="12.5" y="481.7" font-size="13" fill="#111111" text-anchor="middle">15</text>
<rect x="0" y="506" width="24" height="1" fill="#c6c6c6"/>
<rect x="25" y="506" width="625" height="1" fill="#dadada"/>
<text x="12.5" y="501.7" font-size="13" fill="#111111" text-anchor="middle">16</text>
<rect x="88" y="187" width="1" height="313" fill="#dadada"/>
<rect x="152" y="187" width="1" height="313" fill="#dadada"/>
<rect x="216" y="187" width="1" height="313" fill="#dadada"/>
<rect x="280" y="187" width="1" height="313" fill="#dadada"/>
<rect x="344" y="187" width="1" height="313" fill="#dadada"/>
<rect x="408" y="187" width="1" height="313" fill="#dadada"/>
<rect x="472" y="187" width="1" height="313" fill="#dadada"/>
<rect x="536" y="187" width="1" height="313" fill="#dadada"/>
<rect x="600" y="187" width="1" height="313" fill="#dadada"/>
<rect x="88" y="206" width="128" height="20" fill="#d9d9d9"/>
<g fill="#000"><rect x="88" y="206" width="129" height="1"/><rect x="88" y="226" width="129" height="1"/><rect x="88" y="426" width="129" height="1"/><rect x="88" y="206" width="1" height="221"/><rect x="152" y="206" width="1" height="221"/><rect x="216" y="206" width="1" height="221"/></g>
<text x="90.6" y="222" font-size="13" fill="#000" textLength="49.5" lengthAdjust="spacingAndGlyphs">X-Value</text>
<text x="154.4" y="222" font-size="13" fill="#000" textLength="49.5" lengthAdjust="spacingAndGlyphs">Y-Value</text>
<text x="150.5" y="241.5" font-size="13" fill="#000" text-anchor="end">1</text>
<text x="214.5" y="241.5" font-size="13" fill="#000" text-anchor="end">1.04</text>
<text x="150.5" y="261.5" font-size="13" fill="#000" text-anchor="end">2</text>
<text x="214.5" y="261.5" font-size="13" fill="#000" text-anchor="end">1.95</text>
<text x="150.5" y="281.5" font-size="13" fill="#000" text-anchor="end">3</text>
<text x="214.5" y="281.5" font-size="13" fill="#000" text-anchor="end">3.06</text>
<text x="150.5" y="301.5" font-size="13" fill="#000" text-anchor="end">4</text>
<text x="214.5" y="301.5" font-size="13" fill="#000" text-anchor="end">4.04</text>
<text x="150.5" y="321.5" font-size="13" fill="#000" text-anchor="end">5</text>
<text x="214.5" y="321.5" font-size="13" fill="#000" text-anchor="end">4.66</text>
<text x="150.5" y="341.5" font-size="13" fill="#000" text-anchor="end">6</text>
<text x="214.5" y="341.5" font-size="13" fill="#000" text-anchor="end">5.58</text>
<text x="150.5" y="361.5" font-size="13" fill="#000" text-anchor="end">7</text>
<text x="214.5" y="361.5" font-size="13" fill="#000" text-anchor="end">6.91</text>
<text x="150.5" y="381.5" font-size="13" fill="#000" text-anchor="end">8</text>
<text x="214.5" y="381.5" font-size="13" fill="#000" text-anchor="end">8.74</text>
<text x="150.5" y="401.5" font-size="13" fill="#000" text-anchor="end">9</text>
<text x="214.5" y="401.5" font-size="13" fill="#000" text-anchor="end">9.78</text>
<text x="150.5" y="421.5" font-size="13" fill="#000" text-anchor="end">10</text>
<text x="214.5" y="421.5" font-size="13" fill="#000" text-anchor="end">10.14</text>
<rect x="229.5" y="207" width="372" height="287" fill="#fff"/>
<rect x="229.5" y="207" width="372" height="287" fill="none" stroke="#8c8c8c" stroke-width="1.4"/>
<text x="349.5" y="235" font-size="16" fill="#595959" textLength="130" lengthAdjust="spacingAndGlyphs">Calibration Curve</text>
<rect x="259" y="459.0" width="328" height="1" fill="#d9d9d9"/>
<rect x="259.0" y="255" width="1" height="205" fill="#d9d9d9"/>
<text x="248.8" y="462.7" font-size="11" fill="#595959" text-anchor="end">0</text>
<rect x="259" y="425.0" width="328" height="1" fill="#d9d9d9"/>
<rect x="314.0" y="255" width="1" height="205" fill="#d9d9d9"/>
<text x="248.8" y="428.7" font-size="11" fill="#595959" text-anchor="end">2</text>
<rect x="259" y="391.0" width="328" height="1" fill="#d9d9d9"/>
<rect x="368.0" y="255" width="1" height="205" fill="#d9d9d9"/>
<text x="248.8" y="394.7" font-size="11" fill="#595959" text-anchor="end">4</text>
<rect x="259" y="357.0" width="328" height="1" fill="#d9d9d9"/>
<rect x="423.0" y="255" width="1" height="205" fill="#d9d9d9"/>
<text x="248.8" y="360.7" font-size="11" fill="#595959" text-anchor="end">6</text>
<rect x="259" y="323.0" width="328" height="1" fill="#d9d9d9"/>
<rect x="477.0" y="255" width="1" height="205" fill="#d9d9d9"/>
<text x="248.8" y="326.7" font-size="11" fill="#595959" text-anchor="end">8</text>
<rect x="259" y="289.0" width="328" height="1" fill="#d9d9d9"/>
<rect x="531.0" y="255" width="1" height="205" fill="#d9d9d9"/>
<text x="248.8" y="292.7" font-size="11" fill="#595959" text-anchor="end">10</text>
<rect x="259" y="255.0" width="328" height="1" fill="#d9d9d9"/>
<rect x="586.0" y="255" width="1" height="205" fill="#d9d9d9"/>
<text x="248.8" y="258.7" font-size="11" fill="#595959" text-anchor="end">12</text>
<line x1="287.43" y1="445.26" x2="531.60" y2="283.61" stroke="#4472c4" stroke-width="1.8" stroke-dasharray="1.8 2.2"/>
<circle cx="287.43" cy="441.65" r="3.7" fill="#4472c4"/>
<circle cx="314.56" cy="426.21" r="3.7" fill="#4472c4"/>
<circle cx="341.69" cy="407.37" r="3.7" fill="#4472c4"/>
<circle cx="368.82" cy="390.74" r="3.7" fill="#4472c4"/>
<circle cx="395.95" cy="380.22" r="3.7" fill="#4472c4"/>
<circle cx="423.08" cy="364.61" r="3.7" fill="#4472c4"/>
<circle cx="450.21" cy="342.04" r="3.7" fill="#4472c4"/>
<circle cx="477.34" cy="310.98" r="3.7" fill="#4472c4"/>
<circle cx="504.47" cy="293.33" r="3.7" fill="#4472c4"/>
<circle cx="531.60" cy="287.22" r="3.7" fill="#4472c4"/>
<text x="422" y="279.8" font-size="11" fill="#404040" textLength="97" lengthAdjust="spacingAndGlyphs">y = 1.0584x - 0.2313</text>
<text x="446.8" y="294.5" font-size="11" fill="#404040" textLength="48" lengthAdjust="spacingAndGlyphs">R² = 0.988</text>
<circle cx="229.5" cy="207.2" r="4.6" fill="#fff" stroke="#8c8c8c" stroke-width="1.8"/>
<circle cx="229.5" cy="350.7" r="4.6" fill="#fff" stroke="#8c8c8c" stroke-width="1.8"/>
<circle cx="229.5" cy="494.2" r="4.6" fill="#fff" stroke="#8c8c8c" stroke-width="1.8"/>
<circle cx="415.5" cy="207.2" r="4.6" fill="#fff" stroke="#8c8c8c" stroke-width="1.8"/>
<circle cx="415.5" cy="494.2" r="4.6" fill="#fff" stroke="#8c8c8c" stroke-width="1.8"/>
<circle cx="601.5" cy="207.2" r="4.6" fill="#fff" stroke="#8c8c8c" stroke-width="1.8"/>
<circle cx="601.5" cy="350.7" r="4.6" fill="#fff" stroke="#8c8c8c" stroke-width="1.8"/>
<circle cx="601.5" cy="494.2" r="4.6" fill="#fff" stroke="#8c8c8c" stroke-width="1.8"/>
<rect x="397.5" y="459.5" width="51" height="20" fill="none" stroke="#808080" stroke-width="1" stroke-dasharray="2 2"/>
<text x="402.5" y="475" font-size="11" fill="#595959" textLength="41.5" lengthAdjust="spacingAndGlyphs">X-Value</text>
<rect x="443" y="461" width="1" height="17" fill="#000"/>
<circle cx="398.3" cy="459.5" r="3" fill="#b4d6f5" stroke="#3d8fe0" stroke-width="1.2"/>
<circle cx="398.3" cy="479.4" r="3" fill="#b4d6f5" stroke="#3d8fe0" stroke-width="1.2"/>
<circle cx="447.9" cy="459.5" r="3" fill="#b4d6f5" stroke="#3d8fe0" stroke-width="1.2"/>
<circle cx="447.9" cy="479.4" r="3" fill="#b4d6f5" stroke="#3d8fe0" stroke-width="1.2"/>
<rect x="0.5" y="0.5" width="649" height="499" fill="none" stroke="#000" stroke-width="1"/></svg>
</body></html>
